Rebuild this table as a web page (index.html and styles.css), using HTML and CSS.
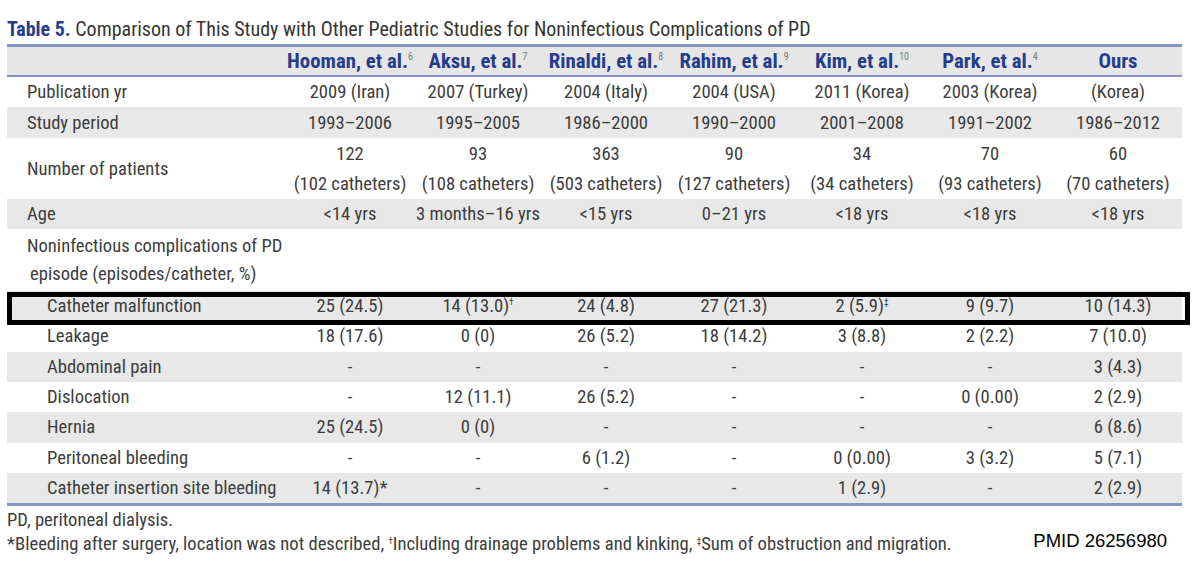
FILE: index.html
```html
<!DOCTYPE html>
<html>
<head>
<meta charset="utf-8">
<link rel="stylesheet" href="styles.css">
</head>
<body>
<div class="page">
  <h1 class="title"><span class="tnum">Table 5.</span> Comparison of This Study with Other Pediatric Studies for Noninfectious Complications of PD</h1>
  <div class="table-wrap">
    <table class="data">
      <colgroup>
        <col class="c-label"><col class="c-d"><col class="c-d"><col class="c-d"><col class="c-d"><col class="c-d"><col class="c-d"><col class="c-d">
      </colgroup>
      <thead>
        <tr>
          <th></th>
          <th>Hooman, et al.<sup>6</sup></th>
          <th>Aksu, et al.<sup>7</sup></th>
          <th>Rinaldi, et al.<sup>8</sup></th>
          <th>Rahim, et al.<sup>9</sup></th>
          <th>Kim, et al.<sup>10</sup></th>
          <th>Park, et al.<sup>4</sup></th>
          <th>Ours</th>
        </tr>
      </thead>
      <tbody>
        <tr class="r-pub">
          <td class="lbl">Publication yr</td>
          <td>2009 (Iran)</td><td>2007 (Turkey)</td><td>2004 (Italy)</td><td>2004 (USA)</td><td>2011 (Korea)</td><td>2003 (Korea)</td><td>(Korea)</td>
        </tr>
        <tr class="g r-study">
          <td class="lbl">Study period</td>
          <td>1993–2006</td><td>1995–2005</td><td>1986–2000</td><td>1990–2000</td><td>2001–2008</td><td>1991–2002</td><td>1986–2012</td>
        </tr>
        <tr class="tall">
          <td class="lbl">Number of patients</td>
          <td>122<br>(102 catheters)</td><td>93<br>(108 catheters)</td><td>363<br>(503 catheters)</td><td>90<br>(127 catheters)</td><td>34<br>(34 catheters)</td><td>70<br>(93 catheters)</td><td>60<br>(70 catheters)</td>
        </tr>
        <tr class="g">
          <td class="lbl">Age</td>
          <td>&lt;14 yrs</td><td>3 months–16 yrs</td><td>&lt;15 yrs</td><td>0–21 yrs</td><td>&lt;18 yrs</td><td>&lt;18 yrs</td><td>&lt;18 yrs</td>
        </tr>
        <tr class="tall2">
          <td class="lbl top">Noninfectious complications of PD<br><span class="cont">episode (episodes/catheter, %)</span></td>
          <td></td><td></td><td></td><td></td><td></td><td></td><td></td>
        </tr>
        <tr class="g s">
          <td class="lbl sub">Catheter malfunction</td>
          <td>25 (24.5)</td><td>14 (13.0)<sup>†</sup></td><td>24 (4.8)</td><td>27 (21.3)</td><td>2 (5.9)<sup>‡</sup></td><td>9 (9.7)</td><td>10 (14.3)</td>
        </tr>
        <tr class="s">
          <td class="lbl sub">Leakage</td>
          <td>18 (17.6)</td><td>0 (0)</td><td>26 (5.2)</td><td>18 (14.2)</td><td>3 (8.8)</td><td>2 (2.2)</td><td>7 (10.0)</td>
        </tr>
        <tr class="g s">
          <td class="lbl sub">Abdominal pain</td>
          <td>-</td><td>-</td><td>-</td><td>-</td><td>-</td><td>-</td><td>3 (4.3)</td>
        </tr>
        <tr class="s">
          <td class="lbl sub">Dislocation</td>
          <td>-</td><td>12 (11.1)</td><td>26 (5.2)</td><td>-</td><td>-</td><td>0 (0.00)</td><td>2 (2.9)</td>
        </tr>
        <tr class="g s">
          <td class="lbl sub">Hernia</td>
          <td>25 (24.5)</td><td>0 (0)</td><td>-</td><td>-</td><td>-</td><td>-</td><td>6 (8.6)</td>
        </tr>
        <tr class="s">
          <td class="lbl sub">Peritoneal bleeding</td>
          <td>-</td><td>-</td><td>6 (1.2)</td><td>-</td><td>0 (0.00)</td><td>3 (3.2)</td><td>5 (7.1)</td>
        </tr>
        <tr class="g s last">
          <td class="lbl sub">Catheter insertion site bleeding</td>
          <td>14 (13.7)*</td><td>-</td><td>-</td><td>-</td><td>1 (2.9)</td><td>-</td><td>2 (2.9)</td>
        </tr>
      </tbody>
    </table>
    <div class="highlight"></div>
  </div>
  <div class="foot">
    <div class="notes">
      <p>PD, peritoneal dialysis.</p>
      <p>*Bleeding after surgery, location was not described, <sup>†</sup>Including drainage problems and kinking, <sup>‡</sup>Sum of obstruction and migration.</p>
    </div>
    <div class="pmid">PMID 26256980</div>
  </div>
</div>
</body>
</html>
```
FILE: styles.css
```css
html, body {
  margin: 0;
  padding: 0;
  background: #ffffff;
}
.page {
  padding: 0 0 0 7px;
  width: 1186px;
  font-family: Roboto, "Liberation Sans", sans-serif;
  font-stretch: 75%;
  color: #3d3d3d;
}
.title {
  margin: 0;
  padding-top: 17px;
  height: 27px;
  font-size: 20px;
  line-height: 24px;
  font-weight: normal;
  color: #353535;
  white-space: nowrap;
}
.tnum {
  font-weight: bold;
  color: #253c8c;
}
.table-wrap {
  position: relative;
  width: 1175px;
}
.data {
  width: 1175px;
  border-collapse: collapse;
  table-layout: fixed;
  font-size: 18.6px;
}
.c-label { width: 279px; }
.c-d { width: 128px; }
.data thead th {
  background: #e6e6e6;
  color: #253c8c;
  font-weight: bold;
  height: 28px;
  padding: 0;
  font-size: 20.8px;
  text-align: center;
  border-top: 3px solid #8393c4;
  border-bottom: 2px solid #8393c4;
  white-space: nowrap;
}
.data thead th sup {
  font-size: 10px;
  color: #7a7a7a;
  font-weight: normal;
  vertical-align: 8px;
  line-height: 0;
}
.data td {
  height: 30px;
  padding: 0;
  text-align: center;
  line-height: 30px;
  white-space: nowrap;
}
.data tr.r-pub td { height: 29px; }
.data tr.r-study td { height: 31px; }
.data tr.s td { height: 30.33px; }
.data tr.g td { background: #e8e8e8; }
.data tr.tall td { height: 61px; line-height: 30px; }
.data tr.tall2 td { height: 62px; }
.data td.lbl {
  text-align: left;
  padding-left: 20px;
}
.data td.top {
  line-height: 28px;
}
.data td.sub { padding-left: 40px; }
.cont { padding-left: 3px; }
.data td sup {
  font-size: 9px;
  vertical-align: 7px;
  line-height: 0;
}
.data tr.last td {
  border-bottom: 3px solid #8393c4;
}
.highlight {
  position: absolute;
  left: 0;
  top: 248px;
  width: 1173px;
  height: 23px;
  border: 5px solid #000000;
}
.foot {
  display: flex;
  align-items: flex-start;
  justify-content: space-between;
  width: 1160px;
  padding-top: 2px;
}
.notes p {
  margin: 0;
  font-size: 18.6px;
  line-height: 24px;
  white-space: nowrap;
}
.notes sup {
  font-size: 9px;
  vertical-align: 6px;
  line-height: 0;
}
.pmid {
  font-family: "Liberation Sans", Arial, sans-serif;
  font-stretch: normal;
  font-size: 18.5px;
  color: #000000;
  padding-top: 22px;
}
```
